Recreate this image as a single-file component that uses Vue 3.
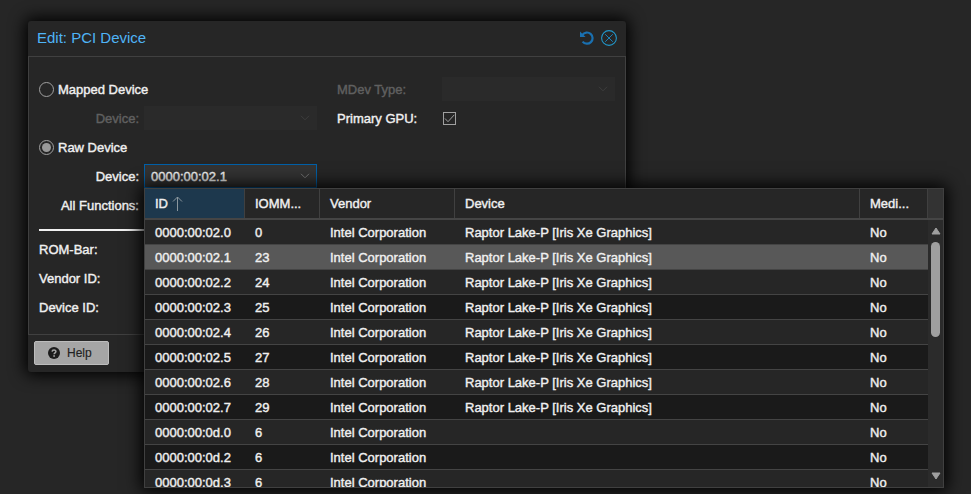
<script setup>
const columns = [
  { key: 'id', label: 'ID', sorted: true },
  { key: 'iommu', label: 'IOMM...' },
  { key: 'vendor', label: 'Vendor' },
  { key: 'device', label: 'Device' },
  { key: 'mediated', label: 'Medi...' },
]
const gpu = 'Raptor Lake-P [Iris Xe Graphics]'
const rows = [
  ['02.0', 0, gpu],
  ['02.1', 23, gpu],
  ['02.2', 24, gpu],
  ['02.3', 25, gpu],
  ['02.4', 26, gpu],
  ['02.5', 27, gpu],
  ['02.6', 28, gpu],
  ['02.7', 29, gpu],
  ['0d.0', 6, ''],
  ['0d.2', 6, ''],
  ['0d.3', 6, ''],
].map(([slot, iommu, device]) => ({
  id: '0000:00:' + slot,
  iommu,
  vendor: 'Intel Corporation',
  device,
  mediated: 'No',
}))
const selected = '0000:00:02.1'
</script>

<template>
  <main class="page">
    <section class="dialog">
      <header class="titlebar">
        <h1>Edit: PCI Device</h1>
        <svg class="undo" width="16" height="16" viewBox="0 0 16 16">
          <path d="M3.4 4.9A5.6 5.6 0 1 1 3.6 11.6" fill="none" stroke="#1a70b0" stroke-width="2.2" />
          <path d="M1 1.6V7H6.6Z" fill="#1a70b0" />
        </svg>
        <svg class="close" width="16" height="16" viewBox="0 0 16 16">
          <circle cx="8" cy="8" r="7.4" fill="none" stroke="#2196c9" stroke-width="1.1" />
          <path d="M4.2 4.2L11.8 11.8M11.8 4.2L4.2 11.8" stroke="#1c80b5" stroke-width="1" />
        </svg>
      </header>

      <div class="body">
        <div class="cols">
          <div class="left">
            <div class="row"><span class="radio"></span>Mapped Device</div>
            <div class="row disabled">
              <label>Device:</label>
              <div class="combo"><svg width="12" height="8" viewBox="0 0 12 8"><path d="M2 1.8L6 5.8L10 1.8" /></svg></div>
            </div>
            <div class="row"><span class="radio checked"></span>Raw Device</div>
            <div class="row">
              <label>Device:</label>
              <div class="combo focus">{{ selected }}<svg width="12" height="8" viewBox="0 0 12 8"><path d="M2 1.8L6 5.8L10 1.8" /></svg></div>
            </div>
            <div class="row"><label>All Functions:</label></div>
          </div>
          <div class="right">
            <div class="row disabled">
              <label>MDev Type:</label>
              <div class="combo"><svg width="12" height="8" viewBox="0 0 12 8"><path d="M2 1.8L6 5.8L10 1.8" /></svg></div>
            </div>
            <div class="row">
              <label>Primary GPU:</label>
              <svg class="check" width="13" height="13" viewBox="0 0 13 13">
                <rect x=".5" y=".5" width="12" height="12" />
                <path d="M2 6.5L5 9.7L11.3 2.8" />
              </svg>
            </div>
          </div>
        </div>
        <div class="rule"></div>
        <div class="row low">ROM-Bar:</div>
        <div class="row low">Vendor ID:</div>
        <div class="row low">Device ID:</div>
      </div>

      <footer class="footer">
        <button class="help">
          <svg width="12" height="12" viewBox="0 0 12 12">
            <circle cx="6" cy="6" r="6" fill="#1c1c1c" />
            <path d="M4.1 4.6C4.2 2.6 7.9 2.5 7.9 4.6C7.9 5.9 6.1 5.8 6.1 7.3" fill="none" stroke="#a5a5a5" stroke-width="1.5" />
            <rect x="5.3" y="8.2" width="1.6" height="1.6" fill="#a5a5a5" />
          </svg>
          Help
        </button>
      </footer>
    </section>

    <section class="picker">
      <div class="grid head">
        <div v-for="c in columns" :key="c.key" class="th" :class="{ sorted: c.sorted }">
          {{ c.label }}
          <svg v-if="c.sorted" width="11" height="15" viewBox="0 0 11 15">
            <path d="M5.5 15V1M1 5.5L5.5 1L10 5.5" fill="none" stroke="#8b979e" stroke-width="1" />
          </svg>
        </div>
        <div class="corner"></div>
      </div>
      <div class="scroller">
        <div class="list">
          <div v-for="r in rows" :key="r.id" class="grid tr" :class="{ selected: r.id === selected }">
            <div v-for="c in columns" :key="c.key" class="td" :class="c.key">{{ r[c.key] }}</div>
          </div>
        </div>
        <div class="scrollbar">
          <svg width="10" height="8" viewBox="0 0 10 8"><path d="M5 1L9 7H1Z" /></svg>
          <div class="thumb"></div>
          <svg class="down" width="10" height="8" viewBox="0 0 10 8"><path d="M5 7L9 1H1Z" /></svg>
        </div>
      </div>
    </section>
  </main>
</template>

<style>
body {
  background: #262626;
}
</style>

<style scoped>
* {
  box-sizing: border-box;
}
.page {
  position: relative;
  width: 971px;
  height: 494px;
  overflow: hidden;
  background: #262626;
  color: #f0f0f0;
  font: 13px/24px "Liberation Sans", Arial, sans-serif;
  -webkit-text-stroke: 0.4px currentColor;
}
.dialog {
  position: absolute;
  left: 28px;
  top: 21px;
  width: 598px;
  height: 351px;
  display: flex;
  flex-direction: column;
  background: #262626;
  border-radius: 3px;
  box-shadow: 0 0 16px 3px #000;
}
.titlebar {
  height: 35px;
  display: flex;
  align-items: center;
  padding: 0 9px 2px;
}
h1 {
  flex: 1;
  margin: 0;
  font-size: 15px;
  font-weight: 400;
  color: #4fb4f7;
  -webkit-text-stroke: 0;
}
.undo {
  margin-right: 6px;
}
.body {
  height: 279px;
  border: 1px solid #404040;
  padding: 20px 10px 0;
}
.cols {
  display: flex;
  gap: 20px;
}
.left,
.right {
  width: 278px;
}
.row {
  height: 24px;
  line-height: 22px;
  padding-top: 2px;
  margin-bottom: 5px;
  display: flex;
  align-items: center;
}
.row.low {
  padding-top: 0;
}
.left label {
  width: 100px;
  margin-right: 5px;
  text-align: right;
}
.right label {
  width: 105px;
}
.radio {
  width: 15px;
  height: 15px;
  margin-top: -1px;
  margin-right: 4px;
  border: 1px solid #a0a0a0;
  border-radius: 50%;
  padding: 2px;
}
.checked::after {
  content: "";
  display: block;
  width: 9px;
  height: 9px;
  border-radius: 50%;
  background: #999;
}
.combo {
  width: 173px;
  height: 24px;
  flex: none;
  display: flex;
  align-items: center;
  margin-top: -2px;
  padding: 0 6px 0 7px;
  background: #333;
}
.combo svg {
  margin-left: auto;
  margin-bottom: 1px;
}
.combo path {
  fill: none;
  stroke: #737373;
}
.focus {
  border: 1px solid #0060a8;
  padding: 2px 5px 0 6px;
}
.focus svg {
  margin-bottom: 3px;
}
.disabled label {
  color: #606060;
}
.disabled .combo {
  background: #2a2a2a;
}
.disabled .combo path {
  stroke: #3d3d3d;
}
.check {
  margin-top: -1px;
  margin-left: 1px;
  fill: none;
  stroke: #a0a0a0;
}
.rule {
  height: 2px;
  margin: 7px 0;
  background: #f0f0f0;
}
.footer {
  padding: 6px;
}
.help {
  width: 75px;
  height: 24px;
  display: flex;
  align-items: center;
  gap: 7px;
  padding: 0 13px;
  border: 1px solid #bdbdbd;
  border-radius: 2px;
  background: #a5a5a5;
  color: #222;
  font: 12px "Liberation Sans", Arial, sans-serif;
  -webkit-text-stroke: 0.15px #222;
}
.picker {
  position: absolute;
  left: 144px;
  top: 188px;
  width: 800px;
  height: 300px;
  display: flex;
  flex-direction: column;
  border: 1px solid #404040;
  background: #262626;
  box-shadow: 0 0 16px 3px #000;
}
.grid {
  display: grid;
  grid-template-columns: 100px 75px 135px 405px 68px 15px;
}
.head {
  height: 31px;
  border-bottom: 2px solid #454545;
}
.th {
  display: flex;
  align-items: center;
  gap: 4px;
  padding-left: 10px;
  border-right: 1px solid #404040;
}
.sorted {
  background: #1d384d;
}
.corner {
  background: #333;
}
.scroller {
  flex: 1;
  min-height: 0;
  display: flex;
}
.list {
  width: 783px;
  overflow: hidden;
}
.tr {
  height: 25px;
  border-bottom: 1px solid #444;
}
.tr:nth-child(even) {
  background: #1a1a1a;
}
.tr.selected {
  background: #585858;
}
.td {
  padding: 2px 0 0 10px;
  line-height: 22px;
  white-space: nowrap;
}
.scrollbar {
  width: 15px;
  display: flex;
  flex-direction: column;
  align-items: center;
  padding: 7px 0;
  background: #2b2b2b;
}
.scrollbar svg {
  fill: #9f9f9f;
  stroke: #9f9f9f;
  stroke-linejoin: round;
}
.thumb {
  width: 9px;
  height: 95px;
  margin-top: 7px;
  border-radius: 5px;
  background: #9f9f9f;
}
.down {
  margin-top: auto;
}
</style>
